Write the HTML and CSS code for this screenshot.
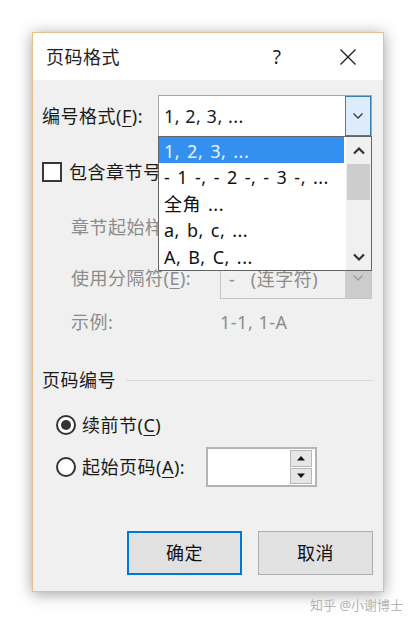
FILE: index.html
```html
<!DOCTYPE html>
<html lang="zh-CN">
<head>
<meta charset="utf-8">
<title>页码格式</title>
<link rel="stylesheet" href="styles.css">
</head>
<body>
<div class="page">
  <div class="dialog">
    <div class="titlebar">
      <span class="title">页码格式</span>
      <span class="tb-btn tb-help">?</span>
      <span class="tb-btn tb-close">
        <svg width="18" height="18" viewBox="0 0 18 18"><path d="M1.5 1.5 L16.5 16.5 M16.5 1.5 L1.5 16.5" stroke="#222" stroke-width="1.4" fill="none"/></svg>
      </span>
    </div>
    <div class="body">
      <div class="row row-format">
        <span class="lbl lbl-format">编号格式(<u>F</u>):</span>
        <div class="combo combo-main">
          <span class="combo-text">1, 2, 3, ...</span>
          <span class="combo-btn">
            <svg width="12" height="8" viewBox="0 0 12 8"><polyline points="1.5,1.5 6,6 10.5,1.5" stroke="#3a3a3a" stroke-width="1.3" fill="none"/></svg>
          </span>
          <div class="listbox">
            <ul class="items">
              <li class="item sel">1, 2, 3, ...</li>
              <li class="item">- 1 -, - 2 -, - 3 -, ...</li>
              <li class="item">全角 ...</li>
              <li class="item">a, b, c, ...</li>
              <li class="item">A, B, C, ...</li>
            </ul>
            <div class="scroll">
              <span class="sb-arrow">
                <svg width="14" height="9" viewBox="0 0 14 9"><polyline points="2,7.5 7,2.5 12,7.5" stroke="#333" stroke-width="2.2" fill="none"/></svg>
              </span>
              <span class="sb-thumb"></span>
              <span class="sb-track"></span>
              <span class="sb-arrow">
                <svg width="14" height="9" viewBox="0 0 14 9"><polyline points="2,1.5 7,6.5 12,1.5" stroke="#333" stroke-width="2.2" fill="none"/></svg>
              </span>
            </div>
          </div>
        </div>
      </div>

      <div class="row row-check">
        <span class="checkbox"></span>
        <span class="lbl clip clip-check">包含章节号</span>
      </div>

      <div class="row row-sub row-tall">
        <span class="sub-lbl"><span class="lbl dis clip clip-sub">章节起始样</span></span>
        <div class="combo combo-dis">
          <span class="combo-text"></span>
          <span class="combo-btn-dis"></span>
        </div>
      </div>

      <div class="row row-sub row-tall row-sep">
        <span class="lbl dis sub-lbl">使用分隔符(<u>E</u>):</span>
        <div class="combo combo-dis">
          <span class="combo-text combo-text-dis">-&nbsp;&nbsp;&nbsp;(连字符)</span>
          <span class="combo-btn-dis">
            <svg width="12" height="8" viewBox="0 0 12 8"><polyline points="1.5,1.5 6,6 10.5,1.5" stroke="#9a9a9a" stroke-width="1.3" fill="none"/></svg>
          </span>
        </div>
      </div>

      <div class="row row-sub row-example">
        <span class="lbl dis sub-lbl">示例:</span>
        <span class="lbl dis">1-1, 1-A</span>
      </div>

      <div class="row group-head">
        <span class="lbl">页码编号</span>
        <span class="group-line"></span>
      </div>

      <div class="row row-radio row-radio1">
        <span class="radio checked"><span class="dot"></span></span>
        <span class="lbl">续前节(<u>C</u>)</span>
      </div>

      <div class="row row-radio row-radio2">
        <span class="radio"></span>
        <span class="lbl radio-lbl">起始页码(<u>A</u>):</span>
        <div class="spinner">
          <span class="spin-field"></span>
          <span class="spin-btns">
            <span class="spin-btn"><svg width="10" height="6" viewBox="0 0 10 6"><polygon points="1,5.5 5,1 9,5.5" fill="#111"/></svg></span>
            <span class="spin-btn"><svg width="10" height="6" viewBox="0 0 10 6"><polygon points="1,0.5 5,5 9,0.5" fill="#111"/></svg></span>
          </span>
        </div>
      </div>

      <div class="row buttons">
        <span class="btn btn-default">确定</span>
        <span class="btn">取消</span>
      </div>
    </div>
  </div>
  <div class="watermark">知乎 @小谢博士</div>
</div>
</body>
</html>
```

FILE: styles.css
```css
* { box-sizing: border-box; }

html, body {
  margin: 0;
  padding: 0;
  background: #ffffff;
}

body {
  font-family: "Noto Sans", "Noto Sans CJK SC", sans-serif;
  font-size: 18px;
  letter-spacing: 0.5px;
  color: #1a1a1a;
}

.page {
  width: 417px;
  height: 625px;
  padding: 32px 0 0 32px;
  position: relative;
}

.dialog {
  width: 352px;
  border: 1px solid #e6bf8c;
  background: #f0f0f0;
  box-shadow: 0 2px 14px rgba(0, 0, 0, 0.38);
}

.titlebar {
  height: 47px;
  background: #ffffff;
  display: flex;
  align-items: center;
  padding-left: 13px;
  padding-right: 12px;
}

.title {
  flex: 1;
  color: #222;
  line-height: 24px;
  padding-top: 1px;
}

.tb-btn {
  width: 46px;
  height: 47px;
  display: flex;
  align-items: center;
  justify-content: center;
}

.tb-help {
  margin-right: 25px;
  font-size: 19px;
  color: #222;
}

.body {
  padding: 15px 10px 16px 9px;
  display: flex;
  flex-direction: column;
}

.row {
  display: flex;
  align-items: center;
}

.lbl {
  line-height: 24px;
  white-space: nowrap;
}

.lbl u {
  text-decoration-thickness: 1px;
  text-underline-offset: 3px;
}

.dis { color: #8c8c8c; }

.clip {
  display: block;
  overflow: hidden;
}

.clip-check { width: 89px; }

.clip-sub { width: 87px; }

/* row 1 */
.row-format { height: 42px; }

.lbl-format { width: 116px; }

.combo {
  position: relative;
  height: 42px;
  display: flex;
  align-items: center;
}

.combo-main {
  width: 214px;
  background: #ffffff;
  border: 1px solid #a6a6a6;
}

.combo-text {
  flex: 1;
  padding-left: 5px;
  line-height: 24px;
  white-space: nowrap;
}

.combo-btn {
  width: 26px;
  height: 40px;
  border: 1px solid #3c7fb1;
  background: #dcecfc;
  display: flex;
  align-items: center;
  justify-content: center;
}

/* dropdown list */
.listbox {
  position: absolute;
  left: -1px;
  top: 40px;
  width: 214px;
  height: 135px;
  border: 1px solid #646464;
  background: #ffffff;
  display: flex;
  z-index: 5;
}

.items {
  list-style: none;
  margin: 0 2px 0 0;
  padding: 0;
  flex: 1;
}

.item {
  height: 26.5px;
  padding: 3px 0 0 5px;
  line-height: 22px;
  white-space: nowrap;
  word-spacing: 1.8px;
  color: #111;
}

.item.sel {
  background: #3490f0;
  color: #eaf4ff;
  height: 26px;
}

.scroll {
  width: 25px;
  background: #f0f0f0;
  display: flex;
  flex-direction: column;
}

.sb-arrow {
  height: 26px;
  display: flex;
  align-items: center;
  justify-content: center;
}

.sb-thumb {
  height: 36px;
  margin: 1px 1px 0 1px;
  background: #cdcdcd;
}

.sb-track { flex: 1; }

/* checkbox row */
.row-check {
  margin-top: 25px;
  height: 20px;
}

.checkbox {
  width: 20px;
  height: 20px;
  border: 2px solid #3a3a3a;
  background: #ffffff;
  margin-right: 7px;
}

/* indented rows */
.row-sub { padding-left: 29px; }

.sub-lbl {
  width: 149px;
  flex: none;
}

.row-tall {
  height: 42px;
  margin-top: 24px;
}

.row-sep { margin-top: 9px; }

.combo-dis {
  width: 152px;
  border: 1px solid #c4c4c4;
  background: #f0f0f0;
  color: #8c8c8c;
}

.combo-dis .combo-text { padding-left: 8px; }

.combo-text-dis {
  line-height: 18px;
  padding-top: 2px;
}

.combo-btn-dis {
  width: 26px;
  height: 40px;
  background: #cccccc;
  display: flex;
  align-items: center;
  justify-content: center;
}

.row-example {
  height: 24px;
  margin-top: 11px;
}

/* group */
.group-head {
  height: 24px;
  margin-top: 34px;
}

.group-line {
  flex: 1;
  height: 1px;
  background: #dadada;
  margin-left: 10px;
}

/* radios */
.row-radio { padding-left: 14px; }

.row-radio1 {
  height: 24px;
  margin-top: 21px;
}

.row-radio2 {
  height: 40px;
  margin-top: 10px;
}

.radio {
  width: 20px;
  height: 20px;
  border: 2px solid #333;
  border-radius: 50%;
  background: #ffffff;
  margin-right: 6px;
  display: flex;
  align-items: center;
  justify-content: center;
}

.radio .dot {
  width: 10px;
  height: 10px;
  border-radius: 50%;
  background: #333;
}

.radio-lbl { width: 124px; }

.spinner {
  width: 111px;
  height: 40px;
  border: 2px solid #b4b4b4;
  background: #ffffff;
  display: flex;
  padding: 1px 3px 1px 0;
}

.spin-field { flex: 1; }

.spin-btns {
  width: 22px;
  display: flex;
  flex-direction: column;
  gap: 1px;
}

.spin-btn {
  flex: 1;
  background: #e6e6e6;
  border: 1px solid #b8b8b8;
  display: flex;
  align-items: center;
  justify-content: center;
}

/* buttons */
.buttons {
  margin-top: 44px;
  height: 44px;
  justify-content: flex-end;
  gap: 16px;
}

.btn {
  width: 115px;
  height: 44px;
  background: #e1e1e1;
  border: 1px solid #adadad;
  display: flex;
  align-items: center;
  justify-content: center;
  line-height: 24px;
  color: #111;
}

.btn-default {
  border: 2px solid #0078d7;
}

.watermark {
  position: absolute;
  left: 310px;
  top: 596px;
  font-size: 13px;
  letter-spacing: 0;
  line-height: 18px;
  color: #b5b5b5;
}
```
